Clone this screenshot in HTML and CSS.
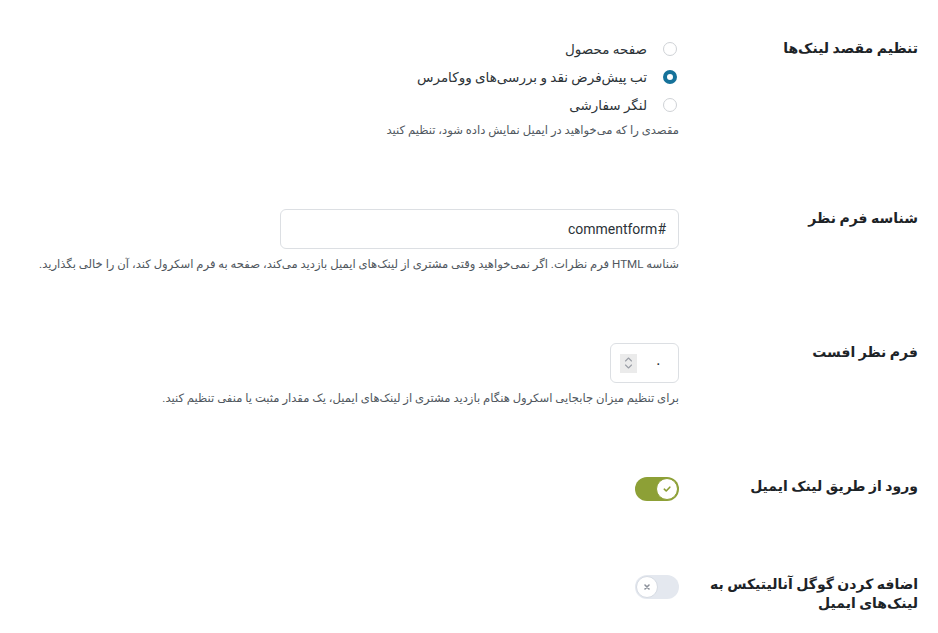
FILE: index.html
```html
<!DOCTYPE html>
<html lang="fa" dir="rtl">
<head>
<meta charset="utf-8">
<title>تنظیمات</title>
<link rel="stylesheet" href="styles.css">
</head>
<body>
<div class="page">
  <div class="row">
    <div class="label label-first">تنظیم مقصد لینک‌ها</div>
    <div class="field">
      <div class="radios">
        <label class="radio"><span class="dot"></span><span class="rtext">صفحه محصول</span></label>
        <label class="radio"><span class="dot checked"></span><span class="rtext">تب پیش‌فرض نقد و بررسی‌های ووکامرس</span></label>
        <label class="radio"><span class="dot"></span><span class="rtext">لنگر سفارشی</span></label>
      </div>
      <p class="help help-first">مقصدی را که می‌خواهید در ایمیل نمایش داده شود، تنظیم کنید</p>
    </div>
  </div>

  <div class="row">
    <div class="label">شناسه فرم نظر</div>
    <div class="field">
      <div class="textbox"><span class="tval">#commentform</span></div>
      <p class="help">شناسه HTML فرم نظرات. اگر نمی‌خواهید وقتی مشتری از لینک‌های ایمیل بازدید می‌کند، صفحه به فرم اسکرول کند، آن را خالی بگذارید.</p>
    </div>
  </div>

  <div class="row">
    <div class="label">فرم نظر افست</div>
    <div class="field">
      <div class="numbox">
        <span class="nval">۰</span>
        <span class="spin">
          <svg width="11" height="14" viewBox="0 0 11 14" fill="none" stroke="#9a9ea6" stroke-width="1.1" stroke-linecap="round" stroke-linejoin="round"><path d="M2.5 5 L5.5 2 L8.5 5"/><path d="M2.5 9 L5.5 12 L8.5 9"/></svg>
        </span>
      </div>
      <p class="help">برای تنظیم میزان جابجایی اسکرول هنگام بازدید مشتری از لینک‌های ایمیل، یک مقدار مثبت یا منفی تنظیم کنید.</p>
    </div>
  </div>

  <div class="row">
    <div class="label">ورود از طریق لینک ایمیل</div>
    <div class="field field-toggle">
      <span class="toggle on">
        <span class="knob">
          <svg width="10" height="10" viewBox="0 0 10 10" fill="none" stroke="#8a9d33" stroke-width="1.6" stroke-linecap="round" stroke-linejoin="round"><path d="M2.3 5.2 L4.2 7 L7.8 3.2"/></svg>
        </span>
      </span>
    </div>
  </div>

  <div class="row">
    <div class="label">اضافه کردن گوگل آنالیتیکس به لینک‌های ایمیل</div>
    <div class="field field-toggle">
      <span class="toggle off">
        <span class="knob">
          <svg width="10" height="10" viewBox="0 0 10 10" fill="none" stroke="#8b909a" stroke-width="1.6" stroke-linecap="round"><path d="M3 3 L7 7 M7 3 L3 7"/></svg>
        </span>
      </span>
    </div>
  </div>
</div>
</body>
</html>
```

FILE: styles.css
```css
html, body {
  margin: 0;
  padding: 0;
  background: #ffffff;
}

body {
  font-family: Roboto, "DejaVu Sans", sans-serif;
  color: #1d2327;
}

.page {
  padding: 1px 20px 0 20px;
}

.row {
  display: flex;
  flex-direction: row;
  align-items: flex-start;
  padding: 35px 0;
}

.label {
  width: 218px;
  flex: none;
  margin-left: 21px;
  font-size: 14px;
  font-weight: bold;
  line-height: 19px;
  color: #1d2327;
}

.label-first {
  margin-top: 3px;
}

.field {
  flex: 1;
  min-width: 0;
}

.radios {
  display: flex;
  flex-direction: column;
  gap: 8px;
  padding-top: 3px;
}

.radio {
  display: flex;
  align-items: center;
  height: 20px;
  font-size: 13.5px;
  color: #2c3338;
}

.dot {
  width: 14px;
  height: 14px;
  border: 1px solid #cfd2d6;
  border-radius: 50%;
  box-sizing: border-box;
  margin-right: 2px;
  margin-left: 16px;
  flex: none;
  background: #ffffff;
}

.dot.checked {
  border: 4px solid #16729a;
  background: #ffffff;
}

.help {
  margin: 6px 0 0 0;
  font-size: 11.6px;
  line-height: 18px;
  color: #50575e;
}

.help-first {
  margin-top: 6px;
}

.textbox {
  width: 399px;
  height: 40px;
  box-sizing: border-box;
  border: 1px solid #dcdfe3;
  border-radius: 6px;
  display: flex;
  align-items: center;
  padding: 0 12px;
  font-size: 14px;
  color: #2c3338;
}

.numbox {
  width: 69px;
  height: 40px;
  box-sizing: border-box;
  border: 1px solid #dcdfe3;
  border-radius: 6px;
  display: flex;
  align-items: center;
  justify-content: space-between;
  padding: 0 9px 0 9px;
  font-size: 14px;
  color: #2c3338;
}

.nval {
  margin-right: 7px;
}

.spin {
  width: 17px;
  height: 19px;
  background: #ebebeb;
  display: flex;
  align-items: center;
  justify-content: center;
}

.field-toggle {
  min-height: 28px;
}

.toggle {
  display: flex;
  align-items: center;
  width: 44px;
  height: 24px;
  border-radius: 12px;
  box-sizing: border-box;
  padding: 0 1px;
}

.toggle.on {
  background: #8da036;
  justify-content: flex-start;
}

.toggle.off {
  background: #e4e8ef;
  justify-content: flex-end;
}

.knob {
  width: 22px;
  height: 22px;
  border-radius: 50%;
  background: #ffffff;
  box-sizing: border-box;
  display: flex;
  align-items: center;
  justify-content: center;
}

.toggle.on .knob {
  border: 1.5px solid #8da036;
}

.toggle.off .knob {
  border: 1px solid #d6dbe3;
}
```
